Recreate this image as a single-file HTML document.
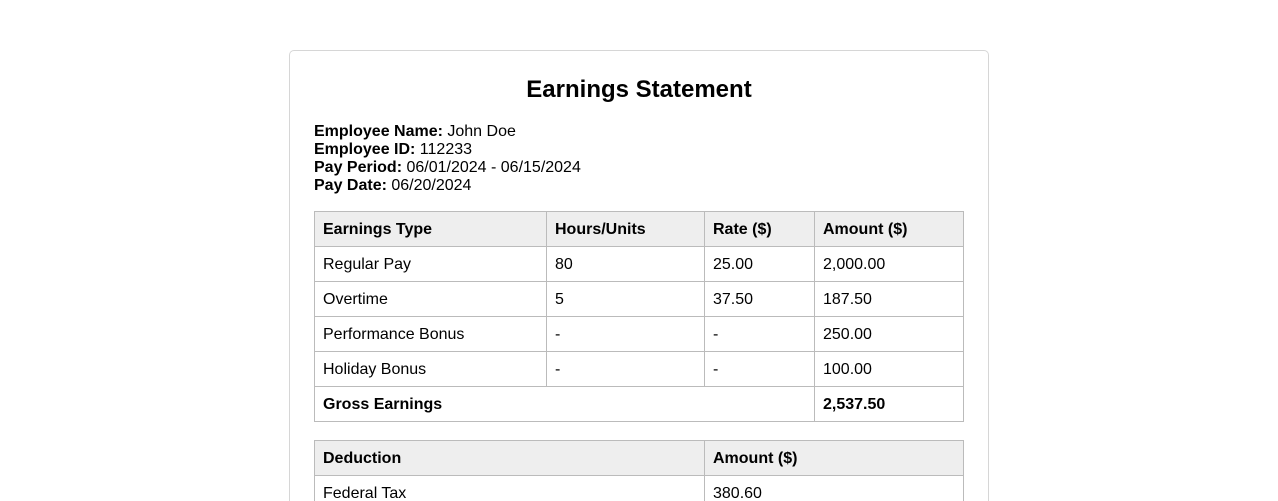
<!DOCTYPE html>
<html><head><meta charset="utf-8"><style>
html,body{margin:0;padding:0;background:#fff;width:1278px;height:501px;overflow:hidden;}
body{font-family:"Liberation Sans",Arial,sans-serif;color:#000;font-size:16px;position:relative;}
.card{position:absolute;left:289px;top:50px;width:650px;padding:25px 24px 0;border:1px solid #d6d6d6;border-bottom:none;border-radius:5px 5px 0 0;height:426px;overflow:hidden;}
h1{margin:0 0 19px;font-size:24px;line-height:28px;text-align:center;font-weight:bold;}
.info{line-height:18px;margin-bottom:17px;}
table{border-collapse:collapse;width:649px;margin-bottom:18px;table-layout:fixed;}
td,th{border:1px solid #bbb;line-height:18px;text-align:left;font-size:16px;padding:9px 8px 7px;}
th{background:#eee;font-weight:bold;}
</style></head><body>
<div class="card">
<h1>Earnings Statement</h1>
<div class="info">
<b>Employee Name:</b> John Doe<br>
<b>Employee ID:</b> 112233<br>
<b>Pay Period:</b> 06/01/2024 - 06/15/2024<br>
<b>Pay Date:</b> 06/20/2024
</div>
<table style="margin-top:-1px">
<colgroup><col style="width:232px"><col style="width:158px"><col style="width:110px"><col style="width:149px"></colgroup>
<tr><th>Earnings Type</th><th>Hours/Units</th><th>Rate ($)</th><th>Amount ($)</th></tr>
<tr><td>Regular Pay</td><td>80</td><td>25.00</td><td>2,000.00</td></tr>
<tr><td>Overtime</td><td>5</td><td>37.50</td><td>187.50</td></tr>
<tr><td>Performance Bonus</td><td>-</td><td>-</td><td>250.00</td></tr>
<tr><td>Holiday Bonus</td><td>-</td><td>-</td><td>100.00</td></tr>
<tr><td colspan="3"><b>Gross Earnings</b></td><td><b>2,537.50</b></td></tr>
</table>
<table>
<colgroup><col style="width:390px"><col style="width:259px"></colgroup>
<tr><th>Deduction</th><th>Amount ($)</th></tr>
<tr><td>Federal Tax</td><td>380.60</td></tr>
<tr><td>State Tax</td><td>120.00</td></tr>
</table>
</div>
</body></html>
